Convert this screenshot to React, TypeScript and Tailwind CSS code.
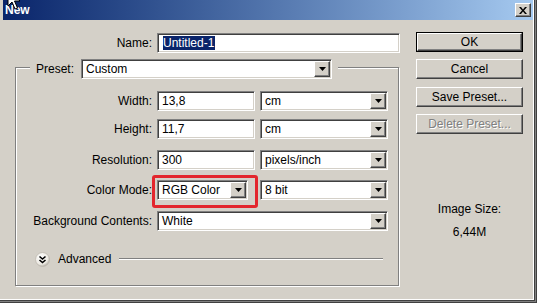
import { ReactNode } from 'react'

const sunken =
  'border border-t-[#808080] border-l-[#808080] border-b-white border-r-white shadow-[inset_1px_1px_0_#404040,inset_-1px_-1px_0_#d4d0c8]'

const raised =
  'border border-t-white border-l-white border-b-[#404040] border-r-[#404040] shadow-[inset_-1px_-1px_0_#808080]'

function Arrow() {
  return (
    <div className={`flex items-center justify-center w-[16px] h-[16px] bg-[#d4d0c8] ${raised}`}>
      <svg width="7" height="4" viewBox="0 0 7 4">
        <path d="M0 0h7L3.5 4z" fill="#000" />
      </svg>
    </div>
  )
}

function Field({ value, className = '' }: { value: string; className?: string }) {
  return (
    <div className={`flex items-center h-[20px] bg-white pl-[4px] ${sunken} ${className}`}>
      {value}
    </div>
  )
}

function Combo({ value, className = '' }: { value: string; className?: string }) {
  return (
    <div className={`flex items-center justify-between h-[20px] bg-white pl-[4px] pr-[1px] ${sunken} ${className}`}>
      <span>{value}</span>
      <Arrow />
    </div>
  )
}

function Row({ label, children, className = '' }: { label: string; children: ReactNode; className?: string }) {
  return (
    <div className={`flex items-center h-[20px] ${className}`}>
      <span className="w-[136px] text-right">{label}</span>
      <div className="flex items-center ml-[5px]">{children}</div>
    </div>
  )
}

function Button({ children, primary, disabled, className = '' }: { children: ReactNode; primary?: boolean; disabled?: boolean; className?: string }) {
  if (primary) {
    return (
      <div className={`h-[20px] border border-black ${className}`}>
        <div className={`flex items-center justify-center h-full ${raised}`}>{children}</div>
      </div>
    )
  }
  return (
    <div
      className={`flex items-center justify-center h-[20px] ${raised} ${
        disabled ? 'text-[#808080] [text-shadow:1px_1px_0_#fff]' : ''
      } ${className}`}
    >
      {children}
    </div>
  )
}

export default function App() {
  return (
    <div className="relative w-[537px] h-[303px] overflow-hidden bg-[#d4d0c8] text-[12px] leading-[14px] text-black font-['Liberation_Sans',Arial,sans-serif] shadow-[inset_-1px_-1px_0_#404040,inset_-2px_-2px_0_#808080,inset_-3px_-3px_0_#404040,inset_-4px_-4px_0_#fff]">
      {/* title bar */}
      <div className="flex items-center justify-between h-[20px] ml-[3px] mr-[4px] pl-[2px] pr-[2px] bg-gradient-to-r from-[#0a246a] to-[#a6caf0]">
        <span className="font-bold text-white text-[12px]">New</span>
        <div className={`flex items-center justify-center w-[16px] h-[14px] bg-[#d4d0c8] ${raised}`}>
          <svg width="8" height="7" viewBox="0 0 8 7">
            <path d="M0 0h2l2 2.5L6 0h2L5 3.5 8 7H6L4 4.5 2 7H0l3-3.5z" fill="#000" />
          </svg>
        </div>
      </div>

      <div className="flex">
        {/* left column */}
        <div className="w-[400px]">
          <div className="flex items-center h-[20px] mt-[13px]">
            <span className="w-[152px] text-right">Name:</span>
            <div className={`flex items-center w-[243px] h-[20px] ml-[5px] bg-white pl-[5px] ${sunken}`}>
              <span className="bg-[#0a246a] text-white pr-[1px]">Untitled-1</span>
            </div>
          </div>

          <div className="ml-[15px] mt-[14px] w-[384px] h-[219px] border border-[#808080] shadow-[inset_1px_1px_0_#fff,1px_1px_0_#fff]">
            {/* preset legend */}
            <div className="flex items-center -mt-[9px] ml-[14px] w-[308px] px-[6px] bg-[#d4d0c8]">
              <span className="w-[45px]">Preset:</span>
              <Combo value="Custom" className="w-[251px]" />
            </div>

            <Row label="Width:" className="mt-[12px]">
              <Field value="13,8" className="w-[98px]" />
              <Combo value="cm" className="w-[128px] ml-[5px]" />
            </Row>
            <Row label="Height:" className="mt-[8px]">
              <Field value="11,7" className="w-[98px]" />
              <Combo value="cm" className="w-[128px] ml-[5px]" />
            </Row>
            <Row label="Resolution:" className="mt-[11px]">
              <Field value="300" className="w-[98px]" />
              <Combo value="pixels/inch" className="w-[128px] ml-[5px]" />
            </Row>
            <Row label="Color Mode:" className="mt-[10px]">
              <div className="relative">
                <Combo value="RGB Color" className="w-[91px]" />
                <div className="absolute left-[-5px] top-[-5px] w-[106px] h-[33px] border-[3px] border-[#e3262d] rounded-[3px]" />
              </div>
              <Combo value="8 bit" className="w-[128px] ml-[12px]" />
            </Row>
            <Row label="Background Contents:" className="mt-[11px]">
              <Combo value="White" className="w-[231px]" />
            </Row>

            {/* advanced */}
            <div className="flex items-center h-[16px] mt-[20px]">
              <svg width="15" height="15" viewBox="0 0 15 15" className="ml-[19px]">
                <defs>
                  <radialGradient id="adv" cx="0.4" cy="0.35" r="0.7">
                    <stop offset="0" stopColor="#ffffff" />
                    <stop offset="0.7" stopColor="#ece9e2" />
                    <stop offset="1" stopColor="#a9a59c" />
                  </radialGradient>
                </defs>
                <circle cx="7.5" cy="7.5" r="7" fill="url(#adv)" stroke="#bcb8ae" strokeWidth="0.8" />
                <path d="M4.5 4.5l3 2.5 3-2.5M4.5 8l3 2.5 3-2.5" fill="none" stroke="#000" strokeWidth="1.6" />
              </svg>
              <span className="ml-[8px]">Advanced</span>
              <div className="flex-1 ml-[8px] mr-[15px] h-[2px] border-t border-[#808080] border-b border-b-white" />
            </div>
          </div>
        </div>

        {/* right column */}
        <div className="w-[107px] ml-[16px] flex flex-col">
          <Button primary className="mt-[12px]">OK</Button>
          <Button className="mt-[7px]">Cancel</Button>
          <Button className="mt-[8px]">Save Preset...</Button>
          <Button disabled className="mt-[7px]">Delete Preset...</Button>
          <div className="mt-[68px] text-center">Image Size:</div>
          <div className="mt-[9px] text-center">6,44M</div>
        </div>
      </div>

      {/* mouse pointer */}
      <svg width="14" height="22" viewBox="0 0 14 22" className="absolute left-[7px] top-[-11px]">
        <path d="M1 1v16l4-4 3 7 2.5-1-3-7H13z" fill="#fff" stroke="#000" strokeWidth="1" strokeLinejoin="miter" />
      </svg>
    </div>
  )
}
